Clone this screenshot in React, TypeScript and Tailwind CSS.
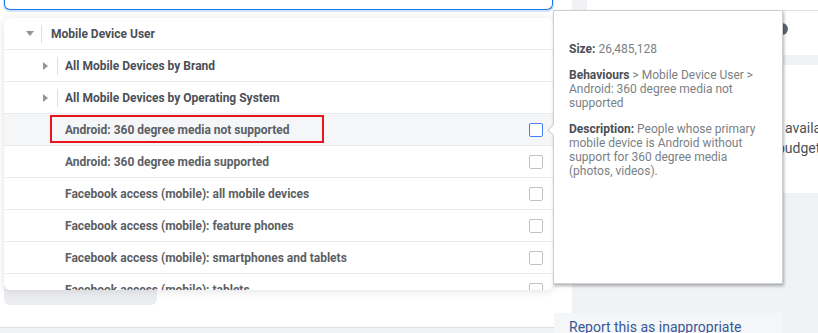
import React from "react";

const items = [
  "Android: 360 degree media not supported",
  "Android: 360 degree media supported",
  "Facebook access (mobile): all mobile devices",
  "Facebook access (mobile): feature phones",
  "Facebook access (mobile): smartphones and tablets",
  "Facebook access (mobile): tablets",
];

function Checkbox({ active }: { active?: boolean }) {
  return (
    <div
      className={
        active
          ? "w-[14px] h-[14px] rounded-[2px] border border-[#4080ff] bg-white shrink-0"
          : "w-[14px] h-[14px] rounded-[2px] border border-[#bec3c9] bg-white shrink-0"
      }
    />
  );
}

export default function App() {
  return (
    <div className="relative w-[818px] h-[333px] overflow-hidden bg-[#f0f2f5] flex font-['Roboto',sans-serif]">
      {/* Left main panel */}
      <div className="w-[572px] h-[328px] bg-white border-b border-[#dddfe2] flex flex-col justify-between shrink-0">
        <div className="ml-[4px] w-[549px] h-[10px] border border-t-0 border-[#1877f2] rounded-b-[6px] shadow-[0_1px_0_1px_#d4e2fa] bg-white" />
        <div className="ml-[4px] mb-[22px] w-[153px] h-[30px] rounded-[6px] bg-[#ebedf0]" />
      </div>

      {/* Right column */}
      <div className="flex-1 flex flex-col pl-[15px]">
        <div className="h-[11px] bg-white border-b border-[#dddfe2]" />
        <div className="h-[44px] bg-white pt-[12px] pl-[189px]">
          <div className="w-[12px] h-[12px] rounded-full bg-[#606770]" />
        </div>
        <div className="mt-[10px] h-[128px] bg-white pt-[53px] pl-[198px] text-[14px] leading-[20px] text-[#4b4f56] whitespace-nowrap">
          <div>available</div>
          <div className="-ml-[8px]">budget</div>
        </div>
      </div>

      {/* Dropdown list */}
      <div className="absolute left-[4px] top-[18px] w-[549px] h-[272px] bg-white rounded-[6px] overflow-hidden shadow-[0_1px_8px_rgba(0,0,0,0.12)] text-[12px] font-bold text-[#5b5f65]">
        <div className="h-[32px] border-b border-[#e9ebee] flex items-center pl-[22px]">
          <div className="w-0 h-0 border-l-[4px] border-r-[4px] border-t-[5px] border-l-transparent border-r-transparent border-t-[#90949c]" />
          <div className="ml-[7px] w-px h-[18px] bg-[#dddfe2]" />
          <span className="ml-[9px] text-[#4b4f56]">Mobile Device User</span>
        </div>
        {["All Mobile Devices by Brand", "All Mobile Devices by Operating System"].map((t) => (
          <div key={t} className="h-[32px] border-b border-[#e9ebee] flex items-center pl-[39px]">
            <div className="w-0 h-0 border-t-[4px] border-b-[4px] border-l-[5px] border-t-transparent border-b-transparent border-l-[#90949c]" />
            <div className="ml-[9px] w-px h-[18px] bg-[#dddfe2]" />
            <span className="ml-[7px] text-[#4b4f56]">{t}</span>
          </div>
        ))}
        {items.map((t, i) => (
          <div
            key={t}
            className={
              i === 0
                ? "relative h-[32px] border-b border-[#e9ebee] flex items-center pl-[61px] pr-[10px] bg-[#f5f6f7]"
                : "relative h-[32px] border-b border-[#e9ebee] flex items-center pl-[61px] pr-[10px]"
            }
          >
            <span className="flex-1">{t}</span>
            <Checkbox active={i === 0} />
            {i === 0 && (
              <div className="absolute left-[46px] top-[1px] w-[274px] h-[28px] border-2 border-[#e8141b]" />
            )}
          </div>
        ))}
      </div>

      {/* Tooltip */}
      <div className="absolute left-[553px] top-[10px] w-[230px] h-[274px] bg-white border border-[#ccd0d5] shadow-[1px_2px_3px_rgba(0,0,0,0.3)] px-[15px] pt-[31px] text-[12px] leading-[14px] text-[#7b7f85]">
        <div className="absolute -left-[5px] top-[115px] w-[8px] h-[8px] bg-white border-l border-b border-[#ccd0d5] rotate-45" />
        <p>
          <span className="font-bold text-[#4b4f56]">Size:</span> 26,485,128
        </p>
        <p className="mt-[12px]">
          <span className="font-bold text-[#4b4f56]">Behaviours</span> &gt; Mobile Device User &gt; Android: 360 degree media not supported
        </p>
        <p className="mt-[12px]">
          <span className="font-bold text-[#4b4f56]">Description:</span> People whose primary mobile device is Android without support for 360 degree media (photos, videos).
        </p>
      </div>

      {/* Report band */}
      <div className="absolute left-[554px] top-[313px] w-[228px] h-[20px] bg-[#f5f6f7] pl-[15px] pt-[6px] text-[14px] leading-[16px] text-[#385898] whitespace-nowrap">
        Report this as inappropriate
      </div>
    </div>
  );
}
